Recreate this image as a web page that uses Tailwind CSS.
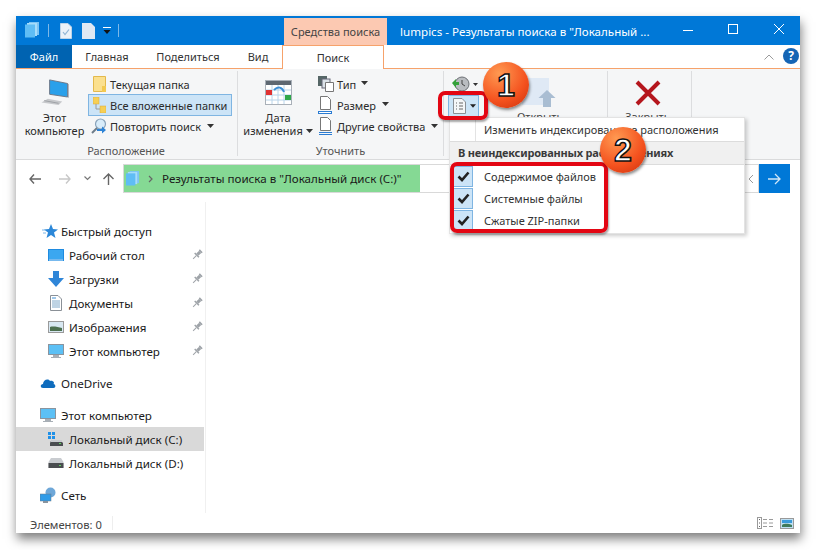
<!DOCTYPE html>
<html lang="ru">
<head>
<meta charset="utf-8">
<title>lumpics - Результаты поиска</title>
<script src="https://cdn.jsdelivr.net/npm/@tailwindcss/browser@4"></script>
</head>
<body class="bg-white overflow-hidden font-['Noto_Sans',sans-serif] text-[11px] leading-none text-[#1a1a1a]">
<div class="relative w-[816px] h-[550px] pt-4 pl-4">

  <!-- window -->
  <div class="w-[784px] h-[517px] flex flex-col bg-white shadow-[1px_6px_10px_rgba(0,0,0,0.5)]">

    <!-- title bar -->
    <div class="h-[29px] shrink-0 bg-[#0078d7] flex items-center relative">
      <svg class="ml-[9px] mt-[-1px]" width="15" height="16" viewBox="0 0 15 16"><rect x="4" y="0" width="10" height="13" fill="#7cc4f4"/><rect x="2" y="1" width="10" height="13" fill="#a6dcfb"/><rect x="0" y="2.500" width="10" height="13" fill="#5fbdf5"/></svg>
      <div class="ml-[8px] w-px h-[13px] bg-[#7db8e8]"></div>
      <svg class="ml-[11px]" width="12" height="16" viewBox="0 0 12 16"><path d="M0.500 0.500H8L11.500 4V15.500H0.500Z" fill="#eaf1f8" stroke="#bcd3e8"/><path d="M3 9l2 2.500 4-5" fill="none" stroke="#8fb4d4" stroke-width="1.200"/></svg>
      <svg class="ml-[10px]" width="13" height="16" viewBox="0 0 13 16"><path d="M0 0H9L13 4V16H0Z" fill="#dfe8f3"/></svg>
      <svg class="ml-[8px]" width="8" height="8" viewBox="0 0 8 8"><rect x="0" y="0" width="8" height="1" fill="#fff"/><path d="M0.500 3H7.500L4 7Z" fill="#111"/></svg>
      <div class="ml-[7px] w-px h-[13px] bg-[#7db8e8]"></div>
      <span class="absolute left-[384px] text-white text-[11.6px] whitespace-nowrap mt-[2px]">lumpics - Результаты поиска в "Локальный ...</span>
      <svg class="absolute left-[667px]" width="10" height="2" viewBox="0 0 10 2"><rect y="0" width="10" height="1" fill="#fff"/></svg>
      <svg class="absolute left-[712px] top-[8px]" width="10" height="10" viewBox="0 0 10 10"><rect x="0.500" y="0.500" width="9" height="9" fill="none" stroke="#fff"/></svg>
      <svg class="absolute left-[758px] top-[8px]" width="10" height="10" viewBox="0 0 10 10"><path d="M0 0L10 10M10 0L0 10" stroke="#fff" stroke-width="1"/></svg>
    </div>

    <!-- tabs -->
    <div class="h-[24px] shrink-0 flex items-stretch relative border-b border-[#f6a26b] bg-white text-[#333]">
      <div class="w-[56px] bg-[#0063b1] text-white flex items-center justify-center">Файл</div>
      <div class="w-[70px] flex items-center justify-center">Главная</div>
      <div class="w-[92px] flex items-center justify-center">Поделиться</div>
      <div class="w-[48px] flex items-center justify-center">Вид</div>
      <div class="w-[102px] h-[24px] bg-white border-x border-t border-[#f6a26b] flex items-center justify-center">Поиск</div>
      <svg class="absolute left-[748px] top-[9px]" width="10" height="6" viewBox="0 0 10 6"><path d="M0.500 5.500L5 1L9.500 5.500" fill="none" stroke="#9a9a9a"/></svg>
      <div class="absolute left-[767px] top-[3px] w-[16px] h-[16px] rounded-full bg-[#1565b5] text-white font-bold text-[12px] flex items-center justify-center">?</div>
    </div>

    <!-- ribbon -->
    <div class="h-[91px] shrink-0 bg-[#f5f6f7] border-b border-[#dadbdc] flex text-[#2b2b2b]">

      <div class="w-[222px] shrink-0 mt-[2px] mb-[3px] border-r border-[#dcdddf] flex flex-col">
        <div class="flex h-[66px] pt-[2px]">
          <div class="w-[72px] pl-[5px] flex flex-col items-center">
            <svg class="mt-[6px]" width="32" height="30" viewBox="0 0 32 30"><path d="M10 1L30 5V20L10 17Z" fill="#2aa0ea" stroke="#6a7280"/><path d="M30 5L31 6V21L30 20Z" fill="#7a8290"/><path d="M8 22L24 25L20 29L1 26Z" fill="#c6c8cb"/><path d="M4 24L20 27" stroke="#9a9da1"/></svg>
            <span class="mt-[5px] leading-[13px] text-center">Этот<br>компьютер</span>
          </div>
          <div class="flex flex-col w-[144px]">
            <div class="h-[22px] flex items-center pl-[5px] gap-[4px] whitespace-nowrap">
              <svg width="13" height="16" viewBox="0 0 13 16"><path d="M0.500 0.500H12.500V15.500H0.500Z" fill="#fbe08e" stroke="#e3b94c"/><rect x="9" y="10" width="4" height="6" fill="#f3c94f"/></svg>
              <span class="pt-[1px]">Текущая папка</span>
            </div>
            <div class="h-[22px] flex items-center pl-[5px] gap-[4px] bg-[#cce4f7] border border-[#7fb5e2] whitespace-nowrap">
              <svg class="ml-[-1px]" width="13" height="16" viewBox="0 0 13 16"><rect x="0" y="0" width="6" height="7" fill="#f6cf55" stroke="#d8a93a" stroke-width="0.500"/><path d="M3 7V12H7" fill="none" stroke="#9a9a9a"/><rect x="7" y="9" width="6" height="7" fill="#f6cf55" stroke="#d8a93a" stroke-width="0.500"/></svg>
              <span class="pt-[1px]">Все вложенные папки</span>
            </div>
            <div class="h-[22px] flex items-center pl-[3px] gap-[3px] whitespace-nowrap">
              <svg width="16" height="16" viewBox="0 0 16 16"><circle cx="9.500" cy="6" r="5" fill="#d8ecfa" stroke="#8aa4bb" stroke-width="1.200"/><path d="M6 10L1 15" stroke="#6d7c8a" stroke-width="2"/><path d="M6 11H11V8.500L15 12L11 15.500V13H6Z" fill="#2d83d6"/></svg>
              <span class="pt-[1px]">Повторить поиск</span>
              <svg class="ml-[3px] mb-[1px]" width="7" height="4" viewBox="0 0 7 4"><path d="M0 0H7L3.500 4Z" fill="#333"/></svg>
            </div>
          </div>
        </div>
        <div class="flex-1 flex items-center justify-center pr-[1px] pt-[8px] text-[#555]">Расположение</div>
      </div>

      <div class="w-[206px] shrink-0 mt-[2px] mb-[3px] border-r border-[#dcdddf] flex flex-col">
        <div class="flex h-[66px] pt-[2px]">
          <div class="w-[80px] flex flex-col items-center">
            <svg class="mt-[6px]" width="27" height="27" viewBox="0 0 27 27"><rect x="0.500" y="1.500" width="26" height="24" fill="#fff" stroke="#a9b0b8"/><rect x="1" y="2" width="25" height="4" fill="#5e6872"/><path d="M1 11H26M1 16H26M1 21H26M7 6V25M13 6V25M19 6V25" stroke="#b8d4ea"/><rect x="1" y="11" width="6" height="5" fill="#e03131"/><rect x="20" y="16" width="6" height="5" fill="#2fa84a"/><path d="M9 11C13 7 17 8 19 13" fill="none" stroke="#3c8fd6" stroke-width="2"/></svg>
            <span class="mt-[5px] leading-[13px] text-center whitespace-nowrap">Дата<br>изменения <svg class="inline mb-[2px]" width="7" height="4" viewBox="0 0 7 4"><path d="M0 0H7L3.500 4Z" fill="#333"/></svg></span>
          </div>
          <div class="flex flex-col whitespace-nowrap">
            <div class="h-[22px] flex items-center gap-[3px]">
              <svg width="16" height="16" viewBox="0 0 16 16"><rect x="0" y="0" width="9" height="10" fill="#566" /><rect x="4" y="3" width="8" height="9" fill="#dbe2e8" stroke="#667"/><path d="M7.500 6.500H15.500V15.500H7.500Z" fill="#fff" stroke="#777"/></svg>
              <span class="pt-[1px]">Тип</span>
              <svg class="ml-[2px] mb-[1px]" width="7" height="4" viewBox="0 0 7 4"><path d="M0 0H7L3.500 4Z" fill="#333"/></svg>
            </div>
            <div class="h-[22px] flex items-center gap-[4px]">
              <svg width="15" height="18" viewBox="0 0 15 18"><path d="M2.500 0.500H9.500L12.500 3.500V13.500H2.500Z" fill="#fff" stroke="#777"/><rect x="0.500" y="15.500" width="13" height="2" fill="#fff" stroke="#2b7cd3"/></svg>
              <span class="pt-[1px]">Размер</span>
              <svg class="ml-[2px] mb-[1px]" width="7" height="4" viewBox="0 0 7 4"><path d="M0 0H7L3.500 4Z" fill="#333"/></svg>
            </div>
            <div class="h-[22px] flex items-center gap-[4px]">
              <svg width="15" height="18" viewBox="0 0 15 18"><path d="M2.500 0.500H9.500L12.500 3.500V13.500H2.500Z" fill="#fff" stroke="#777"/><path d="M1 15.500H14M1 17.500H14" stroke="#2b7cd3"/></svg>
              <span class="pt-[1px]">Другие свойства</span>
              <svg class="ml-[2px] mb-[1px]" width="7" height="4" viewBox="0 0 7 4"><path d="M0 0H7L3.500 4Z" fill="#333"/></svg>
            </div>
          </div>
        </div>
        <div class="flex-1 flex items-center justify-center pt-[8px] text-[#555]">Уточнить</div>
      </div>

      <div class="w-[164px] shrink-0 mt-[2px] mb-[3px] border-r border-[#dcdddf] flex">
        <div class="w-[44px] flex flex-col pt-[2px]">
          <div class="h-[22px] flex items-center pl-[8px] gap-[3px]">
            <svg width="18" height="16" viewBox="0 0 18 16"><circle cx="10" cy="8" r="7" fill="#b9bcc0" stroke="#6c7075"/><path d="M10 4V8L13 10" fill="none" stroke="#444"/><path d="M0 7L4 3V6H7V9H4V12Z" fill="#35a03a"/></svg>
            <svg width="5" height="3" viewBox="0 0 7 4"><path d="M0 0H7L3.500 4Z" fill="#333"/></svg>
          </div>
          <div class="h-[22px] w-[31px] ml-[4px] flex items-center pl-[4px] gap-[4px] bg-[#cce4f7] border border-[#7fb5e2]">
            <svg width="13" height="16" viewBox="0 0 13 16"><path d="M0.500 0.500H9L12.500 4V15.500H0.500Z" fill="#f4f6f8" stroke="#8a8f95"/><path d="M3 5H4M6 5H10M3 8H4M6 8H10M3 11H4M6 11H10" stroke="#666"/></svg>
            <svg width="6" height="4" viewBox="0 0 7 4"><path d="M0 0H7L3.500 4Z" fill="#222"/></svg>
          </div>
        </div>
        <div class="flex-1 flex flex-col items-start">
          <svg class="mt-[7px] ml-[34px]" width="34" height="29" viewBox="0 0 34 29"><rect x="0" y="0" width="27" height="27" fill="#dfe9f5"/><path d="M25 12L33.500 20H29V29H21V20H16.500Z" fill="#a9bdd2"/></svg>
          <span class="mt-[3px] ml-[29px] leading-[13px] text-[#444]">Открыть</span>
        </div>
      </div>

      <div class="w-[84px] shrink-0 mt-[2px] mb-[3px] border-r border-[#dcdddf] flex flex-col items-center pr-[4px]">
        <svg class="mt-[9px]" width="26" height="26" viewBox="0 0 26 26"><path d="M2 2L24 24M24 2L2 24" stroke="#b5161d" stroke-width="4"/></svg>
        <span class="mt-[4px] leading-[13px] text-[#444]">Закрыть</span>
      </div>
    </div>

    <!-- address bar -->
    <div class="h-[42px] shrink-0 flex items-center relative pb-[5px]">
      <svg class="ml-[13px]" width="12" height="10" viewBox="0 0 12 10"><path d="M5 0.500L1 5L5 9.500M1 5H12" fill="none" stroke="#666" stroke-width="1.400"/></svg>
      <svg class="ml-[18px]" width="12" height="10" viewBox="0 0 12 10"><path d="M7 0.500L11 5L7 9.500M11 5H0" fill="none" stroke="#c8c8c8" stroke-width="1.400"/></svg>
      <svg class="ml-[13px]" width="7" height="5" viewBox="0 0 7 5"><path d="M0.500 0.500L3.500 3.500L6.500 0.500" fill="none" stroke="#777" stroke-width="1.200"/></svg>
      <svg class="ml-[12px]" width="11" height="12" viewBox="0 0 11 12"><path d="M5.500 12V1M0.500 6L5.500 1L10.500 6" fill="none" stroke="#666" stroke-width="1.400"/></svg>
      <div class="ml-[9px] w-[636px] h-[29px] border border-[#d9d9d9] flex items-stretch relative">
        <div class="w-[296px] bg-[#85d994] flex items-center">
          <svg class="ml-[2px]" width="14" height="15" viewBox="0 0 15 16"><rect x="4" y="0" width="10" height="13" fill="#7cc4f4"/><rect x="2" y="1" width="10" height="13" fill="#a6dcfb"/><rect x="0" y="2.500" width="10" height="13" fill="#5fbdf5"/></svg>
          <svg class="ml-[8px]" width="5" height="8" viewBox="0 0 5 8"><path d="M1 1L4 4L1 7" fill="none" stroke="#666" stroke-width="1.200"/></svg>
          <span class="ml-[9px] mt-[1px] whitespace-nowrap text-[11.6px] text-[#1a1a1a]">Результаты поиска в "Локальный диск (C:)"</span>
        </div>
        <svg class="absolute right-[4px] top-[9px]" width="6" height="10" viewBox="0 0 6 10"><path d="M5 1L1 5L5 9" fill="none" stroke="#999"/></svg>
      </div>
      <div class="w-[31px] h-[29px] bg-[#0078d7] flex items-center justify-center">
        <svg width="13" height="12" viewBox="0 0 13 12"><path d="M7 1L12 6L7 11M12 6H0" fill="none" stroke="#cfe6f8" stroke-width="1.300"/></svg>
      </div>
    </div>

    <!-- main -->
    <div class="flex-1 min-h-0 flex">
      <nav class="w-[190px] shrink-0 border-r border-[#f0f0f0] pt-[17px] text-[#1a1a1a] text-[11.6px]">
        <div class="h-6 flex items-center pl-[26px] gap-[3px]">
          <svg width="16" height="14" viewBox="0 0 16 14"><path d="M9 0L11 5L16 5.500L12 8.500L13.500 14L9 11L4.500 14L6 8.500L2 5.500L7 5Z" fill="#2b87d8"/><path d="M0 6H3M1 9H4" stroke="#7cb6e8"/></svg>
          <span class="pt-[1px]">Быстрый доступ</span>
        </div>
        <div class="h-6 flex items-center pl-[32px] pr-[2px]">
          <svg width="16" height="12" viewBox="0 0 16 12"><rect width="16" height="12" fill="#1f8be0"/><rect x="1" y="1" width="14" height="9" fill="#3ba7f0"/><rect x="1" y="10.500" width="14" height="1" fill="#cfe8fb"/></svg>
          <span class="ml-[5px] pt-[1px] flex-1">Рабочий стол</span>
          <svg width="12" height="12" viewBox="0 0 12 12"><g transform="rotate(45 6 6)" fill="#9ea3a8"><rect x="4" y="0" width="4" height="1.500"/><rect x="4.500" y="1.500" width="3" height="4"/><rect x="3" y="5.500" width="6" height="1.500"/><rect x="5.500" y="7" width="1" height="4.500"/></g></svg>
        </div>
        <div class="h-6 flex items-center pl-[32px] pr-[2px]">
          <svg width="16" height="16" viewBox="0 0 16 16"><path d="M5 0H11V7H16L8 16L0 7H5Z" fill="#2f86d8"/></svg>
          <span class="ml-[5px] pt-[1px] flex-1">Загрузки</span>
          <svg width="12" height="12" viewBox="0 0 12 12"><g transform="rotate(45 6 6)" fill="#9ea3a8"><rect x="4" y="0" width="4" height="1.500"/><rect x="4.500" y="1.500" width="3" height="4"/><rect x="3" y="5.500" width="6" height="1.500"/><rect x="5.500" y="7" width="1" height="4.500"/></g></svg>
        </div>
        <div class="h-6 flex items-center pl-[34px] pr-[2px]">
          <svg width="12" height="16" viewBox="0 0 12 16"><path d="M0.500 0.500H8L11.500 4V15.500H0.500Z" fill="#fff" stroke="#8a9097"/><path d="M2 3H6" stroke="#3c8fd6"/><path d="M2 6H10M2 8H10M2 10H10M2 12H10" stroke="#7fa8c9"/></svg>
          <span class="ml-[7px] pt-[1px] flex-1">Документы</span>
          <svg width="12" height="12" viewBox="0 0 12 12"><g transform="rotate(45 6 6)" fill="#9ea3a8"><rect x="4" y="0" width="4" height="1.500"/><rect x="4.500" y="1.500" width="3" height="4"/><rect x="3" y="5.500" width="6" height="1.500"/><rect x="5.500" y="7" width="1" height="4.500"/></g></svg>
        </div>
        <div class="h-6 flex items-center pl-[32px] pr-[2px]">
          <svg width="16" height="12" viewBox="0 0 16 12"><rect x="0.500" y="0.500" width="15" height="11" fill="#d8e8f2" stroke="#9a9a9a"/><path d="M2 6C5 5 10 6 14 7V10H2Z" fill="#4d7050"/></svg>
          <span class="ml-[5px] pt-[1px] flex-1">Изображения</span>
          <svg width="12" height="12" viewBox="0 0 12 12"><g transform="rotate(45 6 6)" fill="#9ea3a8"><rect x="4" y="0" width="4" height="1.500"/><rect x="4.500" y="1.500" width="3" height="4"/><rect x="3" y="5.500" width="6" height="1.500"/><rect x="5.500" y="7" width="1" height="4.500"/></g></svg>
        </div>
        <div class="h-6 flex items-center pl-[32px] pr-[2px]">
          <svg width="16" height="14" viewBox="0 0 16 14"><rect width="16" height="11" fill="#8a949e"/><rect x="1" y="1" width="14" height="9" fill="#5cc0f5"/><rect x="5" y="11" width="6" height="2" fill="#a8afb6"/><rect x="3" y="13" width="10" height="1" fill="#a8afb6"/></svg>
          <span class="ml-[5px] pt-[1px] flex-1">Этот компьютер</span>
          <svg width="12" height="12" viewBox="0 0 12 12"><g transform="rotate(45 6 6)" fill="#9ea3a8"><rect x="4" y="0" width="4" height="1.500"/><rect x="4.500" y="1.500" width="3" height="4"/><rect x="3" y="5.500" width="6" height="1.500"/><rect x="5.500" y="7" width="1" height="4.500"/></g></svg>
        </div>

        <div class="mt-2 h-6 flex items-center pl-[24px] gap-[5px]">
          <svg width="16" height="10" viewBox="0 0 16 10"><path d="M3 10C0 10 0 6 3 6C3 2 8 0 10 3C13 2 15 5 13.500 6C16 6.500 16 10 13.500 10Z" fill="#0f6cbd"/></svg>
          <span class="pt-[1px]">OneDrive</span>
        </div>

        <div class="mt-2 h-6 flex items-center pl-[24px] gap-[5px]">
          <svg width="16" height="14" viewBox="0 0 16 14"><rect width="16" height="11" fill="#8a949e"/><rect x="1" y="1" width="14" height="9" fill="#5cc0f5"/><rect x="5" y="11" width="6" height="2" fill="#a8afb6"/><rect x="3" y="13" width="10" height="1" fill="#a8afb6"/></svg>
          <span class="pt-[1px]">Этот компьютер</span>
        </div>
        <div class="h-6 flex items-center pl-[32px] bg-[#d9d9d9] w-[188px]">
          <svg width="16" height="14" viewBox="0 0 16 14"><rect x="0" y="0" width="3" height="3" fill="#1e90e8"/><rect x="4" y="0" width="3" height="3" fill="#1e90e8"/><rect x="0" y="4" width="3" height="3" fill="#1e90e8"/><rect x="4" y="4" width="3" height="3" fill="#1e90e8"/><path d="M3 9H13L15 11V14H2V11Z" fill="#4a4d50"/><rect x="3" y="8" width="11" height="2" fill="#c9ccd0"/><rect x="11" y="11" width="2" height="1" fill="#5fd35f"/></svg>
          <span class="ml-[5px] pt-[1px]">Локальный диск (C:)</span>
        </div>
        <div class="h-6 flex items-center pl-[32px]">
          <svg width="16" height="10" viewBox="0 0 16 10"><path d="M3 0H13L15.500 4V10H0.500V4Z" fill="#c9ccd0"/><rect x="0.500" y="5" width="15" height="5" fill="#4a4d50"/><rect x="11" y="7" width="2" height="1" fill="#5fd35f"/></svg>
          <span class="ml-[5px] pt-[1px]">Локальный диск (D:)</span>
        </div>

        <div class="mt-2 h-6 flex items-center pl-[24px] gap-[5px]">
          <svg width="16" height="16" viewBox="0 0 16 16"><circle cx="10.500" cy="5.500" r="5" fill="#6ea7d8"/><rect x="0" y="7" width="11" height="7" fill="#2f9be8" stroke="#6e7a85" stroke-width="0.500"/><rect x="3" y="14" width="5" height="2" fill="#8a949e"/></svg>
          <span class="pt-[1px]">Сеть</span>
        </div>
      </nav>
      <div class="flex-1 bg-white"></div>
    </div>

    <!-- status bar -->
    <div class="h-[20px] shrink-0 flex items-center pl-[14px] pr-[6px] text-[#444] text-[11.2px]">
      <span class="pr-[10px] pt-[3px] border-r border-[#eeeeee]">Элементов: 0</span>
      <div class="ml-auto flex items-center gap-[7px]">
        <svg width="16" height="12" viewBox="0 0 16 12"><rect x="0.500" y="0.500" width="4" height="11" fill="#fff" stroke="#9a9a9a"/><path d="M2 2.500H3M2 6H3M2 9.500H3" stroke="#666"/><path d="M6 2.500H10M12 2.500H16M6 6H10M12 6H16M6 9.500H10M12 9.500H16" stroke="#9a9a9a"/></svg>
        <svg width="14" height="11" viewBox="0 0 14 11"><rect x="0.500" y="0.500" width="13" height="10" fill="#bfe0f3" stroke="#9a9a9a"/><path d="M2 7C5 5 9 6 12 7V9H2Z" fill="#3f7a5a"/><rect x="2" y="2" width="10" height="3" fill="#3a9ad9"/></svg>
      </div>
    </div>
  </div>

  <!-- dropdown menu -->
  <div class="absolute left-[449px] top-[117px] w-[296px] h-[117px] bg-white border border-[#e3e3e3] shadow-[2px_2px_4px_rgba(0,0,0,0.2)] text-[#333]">
    <div class="h-[23px] flex items-center">
      <div class="w-[26px] h-full border-r border-[#e3e3e3]"></div>
      <span class="ml-[8px]">Изменить индексированные расположения</span>
    </div>
    <div class="h-[24px] flex items-center pl-[8px] pb-[1px] bg-[#f0f0f0] border-y border-[#dcdcdc] font-bold tracking-[-0.2px] text-[#3a3a3a]">В неиндексированных расположениях</div>
    <div class="flex flex-col">
      <div class="h-[22px] flex items-center">
        <div class="ml-[3px] w-[20px] h-[21px] bg-[#cce4f7] border border-[#7fb5e2] flex items-center justify-center"><svg width="13" height="11" viewBox="0 0 13 11"><path d="M1.500 5.500L5 9L11.500 1.500" fill="none" stroke="#222" stroke-width="2.600"/></svg></div>
        <span class="ml-[11px]">Содержимое файлов</span>
      </div>
      <div class="h-[22px] flex items-center">
        <div class="ml-[3px] w-[20px] h-[21px] bg-[#cce4f7] border border-[#7fb5e2] flex items-center justify-center"><svg width="13" height="11" viewBox="0 0 13 11"><path d="M1.500 5.500L5 9L11.500 1.500" fill="none" stroke="#222" stroke-width="2.600"/></svg></div>
        <span class="ml-[11px]">Системные файлы</span>
      </div>
      <div class="h-[22px] flex items-center">
        <div class="ml-[3px] w-[20px] h-[21px] bg-[#cce4f7] border border-[#7fb5e2] flex items-center justify-center"><svg width="13" height="11" viewBox="0 0 13 11"><path d="M1.500 5.500L5 9L11.500 1.500" fill="none" stroke="#222" stroke-width="2.600"/></svg></div>
        <span class="ml-[11px]">Сжатые ZIP-папки</span>
      </div>
    </div>
  </div>

  <!-- contextual tab label -->
  <div class="absolute left-[284px] top-[18px] w-[103px] h-[27px] bg-[#fcc9b2] text-[#444] flex items-center justify-center">Средства поиска</div>

  <!-- red outlines -->
  <div class="absolute left-[438px] top-[91px] w-[50px] h-[29px] border-[4px] border-[#e30613] rounded-[7px] shadow-[1px_2px_2px_rgba(0,0,0,0.35)]"></div>
  <div class="absolute left-[450px] top-[162px] w-[158px] h-[71px] border-[4px] border-[#e30613] rounded-[7px] shadow-[1px_2px_2px_rgba(0,0,0,0.35)]"></div>

  <!-- numbered badges -->
  <div class="absolute left-[483px] top-[62px] w-[46px] h-[46px] rounded-full bg-[radial-gradient(circle_at_35%_25%,#ff9a52,#f4511e_60%,#c9300c)] shadow-[1px_2px_3px_rgba(0,0,0,0.45)] flex items-center justify-center font-['Liberation_Sans',sans-serif] font-bold text-[32px] text-white [-webkit-text-stroke:1.500px_#111]">1</div>
  <div class="absolute left-[600px] top-[127px] w-[46px] h-[46px] rounded-full bg-[radial-gradient(circle_at_35%_25%,#ff9a52,#f4511e_60%,#c9300c)] shadow-[1px_2px_3px_rgba(0,0,0,0.45)] flex items-center justify-center font-['Liberation_Sans',sans-serif] font-bold text-[32px] text-white [-webkit-text-stroke:1.500px_#111]">2</div>
</div>
</body>
</html>
